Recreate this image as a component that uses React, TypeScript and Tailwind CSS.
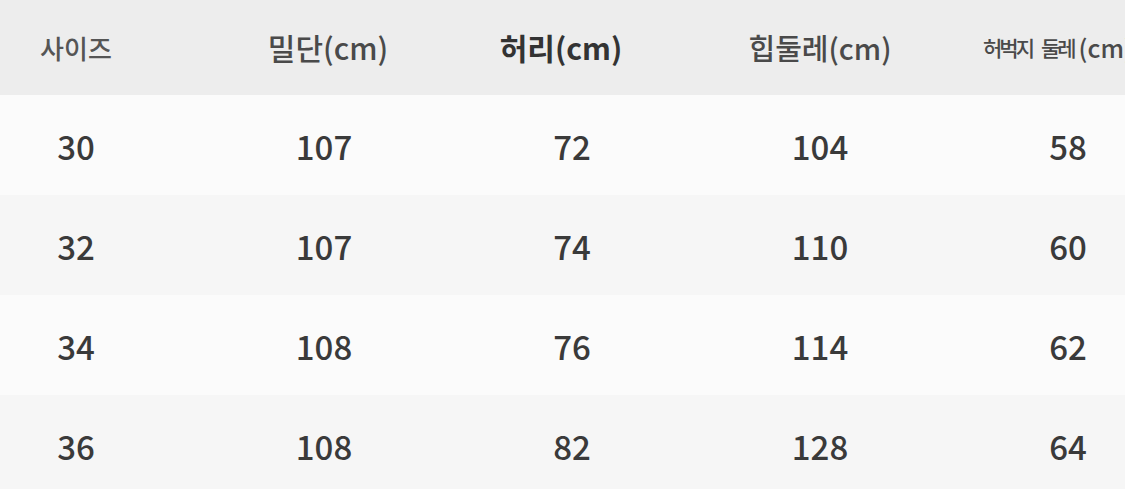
import React from "react";

const rows = [
  ["30", "107", "72", "104", "58"],
  ["32", "107", "74", "110", "60"],
  ["34", "108", "76", "114", "62"],
  ["36", "108", "82", "128", "64"],
];

const rowBg = ["bg-[#fbfbfb]", "bg-[#f6f6f6]", "bg-[#fbfbfb]", "bg-[#f6f6f6]"];

export default function App() {
  return (
    <div
      className="w-[1125px] h-[489px] overflow-hidden bg-[#f8f8f8]"
      style={{ fontFamily: '"Noto Sans CJK KR", "Noto Sans", sans-serif' }}
    >
      <div className="flex h-[95px] items-center bg-[#ededed] -ml-[48px] w-[1240px]">
        <div className="w-[248px] text-center text-[26px] text-[#555555] font-medium">사이즈</div>
        <div className="w-[248px] text-center pl-[8px] text-[30px] text-[#4a4a4a] font-medium">밀단(cm)</div>
        <div className="w-[248px] text-center pr-[22px] text-[30px] text-[#333333] font-bold">허리(cm)</div>
        <div className="w-[248px] text-center text-[29px] text-[#4a4a4a] font-medium">힙둘레(cm)</div>
        <div className="w-[248px] pl-[39px] whitespace-nowrap text-[#4a4a4a] font-medium flex items-center">
          <span className="text-[21px] tracking-[-3px]">허벅지</span>
          <span className="text-[21px] tracking-[-3px] ml-[9px] mr-[5px]">둘레</span>
          <span className="text-[25px]">(cm)</span>
        </div>
      </div>
      {rows.map((r, i) => (
        <div key={i} className={`flex h-[100px] items-center pt-[4px] -ml-[48px] w-[1240px] ${rowBg[i]}`}>
          {r.map((v, j) => (
            <div key={j} className="w-[248px] text-center text-[33px] text-[#3a3a3a] font-medium">
              {v}
            </div>
          ))}
        </div>
      ))}
    </div>
  );
}
